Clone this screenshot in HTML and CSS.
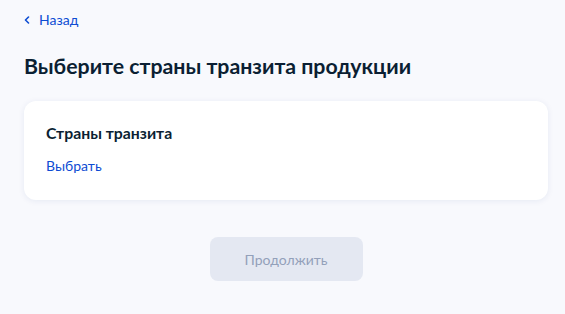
FILE: index.html
```html
<!DOCTYPE html>
<html lang="ru">
<head>
<meta charset="utf-8">
<link rel="stylesheet" href="styles.css">
</head>
<body>
<div class="page">
  <a class="back" href="#">
    <svg class="back-icon" width="6" height="8" viewBox="0 0 6 8"><path d="M4.5 1 L1.5 4 L4.5 7" fill="none" stroke="currentColor" stroke-width="1.6" stroke-linecap="round" stroke-linejoin="round"/></svg>
    <span>Назад</span>
  </a>
  <h1 class="title">Выберите страны транзита продукции</h1>
  <div class="card">
    <h2 class="card-title">Страны транзита</h2>
    <a class="card-link" href="#">Выбрать</a>
  </div>
  <div class="actions">
    <button class="btn" disabled>Продолжить</button>
  </div>
</div>
</body>
</html>
```
FILE: styles.css
```css
html, body {
  margin: 0;
  padding: 0;
  background: #f8f9fd;
  font-family: Lato, "Noto Sans", sans-serif;
  color: #0b1f33;
}
.page {
  padding: 11px 17px 0 24px;
  display: flex;
  flex-direction: column;
}
.back {
  display: flex;
  align-items: center;
  gap: 9px;
  color: #0d4cd3;
  text-decoration: none;
  font-size: 14px;
  line-height: 18px;
}
.back-icon {
  display: block;
}
.title {
  margin: 23px 0 0;
  font-size: 21.3px;
  line-height: 28px;
  font-weight: 700;
}
.card {
  margin-top: 21px;
  background: #ffffff;
  border-radius: 12px;
  box-shadow: 0 1px 6px rgba(14, 46, 122, 0.08);
  padding: 20px 22px 24px;
  display: flex;
  flex-direction: column;
  align-items: flex-start;
}
.card-title {
  margin: 0;
  font-size: 15.8px;
  line-height: 24px;
  font-weight: 700;
}
.card-link {
  margin-top: 11px;
  color: #0d4cd3;
  text-decoration: none;
  font-size: 14px;
  line-height: 20px;
}
.actions {
  margin-top: 37px;
  display: flex;
  justify-content: center;
}
.btn {
  width: 153px;
  height: 44px;
  border: none;
  border-radius: 8px;
  background: #e4e8f2;
  color: #93a0ba;
  font-family: Lato, "Noto Sans", sans-serif;
  font-size: 14px;
}
```
